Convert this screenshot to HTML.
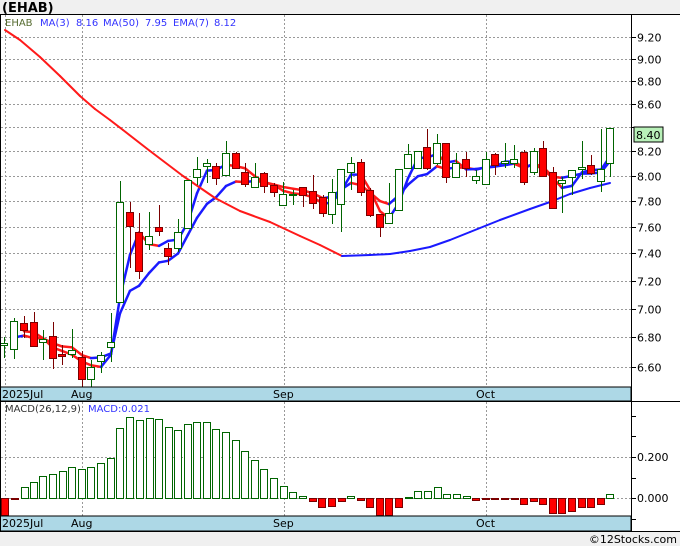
<!DOCTYPE html>
<html><head><meta charset="utf-8"><style>
body{margin:0;background:#f0f0f0;width:680px;height:546px;overflow:hidden;font-family:"DejaVu Sans","Liberation Sans",sans-serif}
svg{position:absolute;left:0;top:0}
</style></head><body>
<svg id="s" width="680" height="546" xmlns="http://www.w3.org/2000/svg" font-family="DejaVu Sans, Liberation Sans, sans-serif">
<rect x="0" y="0" width="680" height="546" fill="#f0f0f0"/>
<text x="2" y="12" font-size="13" font-weight="bold" fill="#000">(EHAB)</text>
<rect x="0" y="14" width="680" height="517" fill="#fff"/>
<g id="grid" stroke="#999" stroke-dasharray="2,2" stroke-width="1"></g>
<g id="lines"></g>
<g id="candles"></g>
<g id="macd"></g>
<rect x="0" y="387" width="631" height="14" fill="#add8e6" stroke="#000"/>
<rect x="0" y="516" width="631" height="15" fill="#add8e6" stroke="#000"/>
<line x1="0.5" y1="14" x2="0.5" y2="531" stroke="#000"/>
<line x1="0" y1="14.5" x2="680" y2="14.5" stroke="#000"/>
<line x1="0" y1="401.5" x2="680" y2="401.5" stroke="#000"/>
<line x1="631.5" y1="14" x2="631.5" y2="531" stroke="#000"/>
<line x1="0" y1="531.5" x2="680" y2="531.5" stroke="#000"/>
<g font-size="11" fill="#000">
<text x="2" y="398">2025Jul</text><text x="71" y="398">Aug</text><text x="273" y="398">Sep</text><text x="476" y="398">Oct</text>
<text x="2" y="527">2025Jul</text><text x="71" y="527">Aug</text><text x="273" y="527">Sep</text><text x="476" y="527">Oct</text>
</g>
<g font-size="10">
<text x="5" y="26" fill="#556b2f">EHAB</text>
<text x="40" y="26" fill="#3333ff">MA(3)</text><text x="76" y="26" fill="#3333ff">8.16</text>
<text x="103" y="26" fill="#3333ff">MA(50)</text><text x="145" y="26" fill="#3333ff">7.95</text>
<text x="173" y="26" fill="#3333ff">EMA(7)</text><text x="214" y="26" fill="#3333ff">8.12</text>
<text x="5" y="412" fill="#333">MACD(26,12,9)</text><text x="88" y="412" fill="#3333ff">MACD:0.021</text>
</g>
<g id="axis" font-size="11" fill="#000"></g>
<rect x="634" y="127" width="29" height="15" fill="#b8f0b8" stroke="#000"/>
<text x="636" y="139" font-size="11">8.40</text>
<text x="677" y="543" font-size="11" text-anchor="end" fill="#000">©12Stocks.com</text>
</svg>
<script>
var NS="http://www.w3.org/2000/svg";
function el(p,t,a,txt){var e=document.createElementNS(NS,t);for(var k in a)e.setAttribute(k,a[k]);if(txt)e.textContent=txt;document.getElementById(p).appendChild(e);return e;}
function Y(p){return 2242.3-993.7*Math.log(p);}
function P(y){return Math.exp((2242.3-y)/993.7);}
var lv=[9.2,9.0,8.8,8.6,8.4,8.2,8.0,7.8,7.6,7.4,7.2,7.0,6.8,6.6];
lv.forEach(function(p){var y=Math.round(Y(p))+0.5;el("grid","line",{x1:1,y1:y,x2:631,y2:y});
 el("axis","line",{x1:631,y1:y,x2:636,y2:y,stroke:"#000"});
 if(p!=8.4)el("axis","text",{x:637,y:y+4},p.toFixed(2));});
[5,82,284,486].forEach(function(x){el("grid","line",{x1:x+.5,y1:15,x2:x+.5,y2:387});el("grid","line",{x1:x+.5,y1:402,x2:x+.5,y2:516});});
[457,498].forEach(function(y){el("grid","line",{x1:1,y1:y+.5,x2:631,y2:y+.5});});
el("axis","text",{x:637,y:461},"0.200");el("axis","text",{x:637,y:502},"0.000");
[416,436,457,478,498,519].forEach(function(y){el("axis","line",{x1:631,y1:y+.5,x2:636,y2:y+.5,stroke:"#000"});});
var C=[[4,343,345,337,358,1],[14,321,349,318,359,1],[24,323,330,316,338,0],[34,322,346,312,347,0],[43,339,342,330,360,1],[53,336,358,322,369,0],[62,354,356,345,365,0],[72,350,354,329,358,1],[82,357,379,351,387,0],[91,367,379,360,387,1],[101,355,361,352,373,1],[111,342,347,313,362,1],[120,202,302,181,302,1],[130,212,226,202,268,0],[139,232,271,213,279,0],[149,236,244,212,250,1],[159,227,231,205,236,0],[168,248,256,243,265,0],[178,232,248,219,252,1],[188,180,228,180,228,1],[197,169,177,157,185,1],[207,163,166,159,183,1],[216,166,178,163,185,0],[226,153,175,141,175,1],[236,153,168,152,169,0],[245,172,184,163,187,0],[255,177,187,163,187,1],[264,173,186,172,193,0],[274,185,192,183,197,0],[283,194,205,182,205,1],[293,194,195,190,205,1],[303,187,195,187,207,0],[313,191,203,175,209,0],[323,197,213,195,217,0],[332,192,214,179,224,1],[341,169,204,169,232,1],[351,163,172,157,190,1],[361,162,192,159,196,0],[370,190,215,188,217,0],[380,214,227,214,237,0],[389,213,223,183,223,1],[399,169,210,169,210,1],[408,154,168,144,168,1],[418,151,168,151,168,1],[427,147,168,129,170,0],[437,143,163,134,165,1],[446,143,177,143,183,0],[456,163,177,153,177,1],[466,159,168,152,177,0],[476,176,180,170,184,1],[486,159,184,152,185,1],[495,154,165,153,175,0],[505,161,163,143,168,1],[514,159,163,145,168,1],[524,152,182,150,185,0],[534,151,172,148,175,1],[543,148,176,141,176,0],[553,172,208,167,208,0],[562,180,183,177,213,1],[572,170,177,170,195,1],[582,167,169,141,179,1],[591,165,173,155,175,0],[601,169,181,129,192,1],[610,128,163,128,177,1]];
var closes=C.map(function(c){return P(c[5]?c[1]:c[2]);});
function drawLine(pts,w){for(var i=1;i<pts.length;i++){var a=pts[i-1],b=pts[i];el("lines","line",{x1:a[0],y1:a[1],x2:b[0],y2:b[1],stroke:b[1]<=a[1]?"#1a1aff":"#ff1a1a","stroke-width":w,"stroke-linecap":"round"});}}
var ma3=[],ema=[],e=closes[0];
for(var i=0;i<C.length;i++){e=i==0?closes[0]:e+(closes[i]-e)*0.25;ema.push([C[i][0],Y(e)]);
 if(i>=2)ma3.push([C[i][0],Y((closes[i]+closes[i-1]+closes[i-2])/3)]);}
drawLine(ema.slice(1),2.5);drawLine(ma3,2.5);
drawLine([[5,30],[20,40],[40,57],[60,76],[80,96],[95,109],[110,120],[123,130],[150,151],[183,176],[215,198],[240,211],[270,222],[300,236],[320,245],[342,256],[370,255],[390,254],[410,251],[430,247],[450,240],[470,232],[500,220],[530,209],[550,202],[570,194],[590,188],[610,183]],2);
C.forEach(function(c){var g=c[5],col=g?"#006400":"#7a0000";
 el("candles","line",{x1:c[0]+.5,y1:c[3],x2:c[0]+.5,y2:c[4],stroke:col});
 el("candles","rect",{x:c[0]-3.5,y:c[1]+.5,width:7,height:Math.max(1,c[2]-c[1]),fill:g?"#fff":"#ff0000",stroke:col});});
var M=[[5,515,0],[15,499,0],[25,487,1],[34,482,1],[43,476,1],[53,474,1],[63,471,1],[72,467,1],[82,469,1],[91,467,1],[101,463,1],[111,458,1],[120,428,1],[130,417,1],[140,420,1],[150,418,1],[159,419,1],[169,427,1],[178,430,1],[188,424,1],[197,422,1],[207,422,1],[216,429,1],[226,432,1],[236,440,1],[245,451,1],[255,460,1],[264,469,1],[274,478,1],[284,486,1],[293,492,1],[303,496,1],[313,501,0],[322,507,0],[332,506,0],[342,501,0],[351,496,1],[361,500,0],[370,507,0],[380,515,0],[389,515,0],[399,507,0],[409,497,1],[418,491,1],[428,491,1],[438,487,1],[447,494,1],[457,494,1],[467,496,1],[476,500,0],[486,499,0],[495,499,0],[505,499,0],[515,499,0],[524,504,0],[534,501,0],[543,504,0],[553,513,0],[562,513,0],[572,511,0],[582,507,0],[591,507,0],[601,504,0],[610,494,1]];
M.forEach(function(m){var z=498,t=Math.min(z,m[1]),h=Math.max(1,Math.abs(m[1]-z));
 if(m[2])el("macd","rect",{x:m[0]-3.5,y:t+.5,width:7,height:h,fill:"#fff",stroke:"#006400"});
 else el("macd","rect",{x:m[0]-3.5,y:z+.5,width:7,height:h,fill:"#ff0000",stroke:"#7a0000"});});
</script>
</body></html>
